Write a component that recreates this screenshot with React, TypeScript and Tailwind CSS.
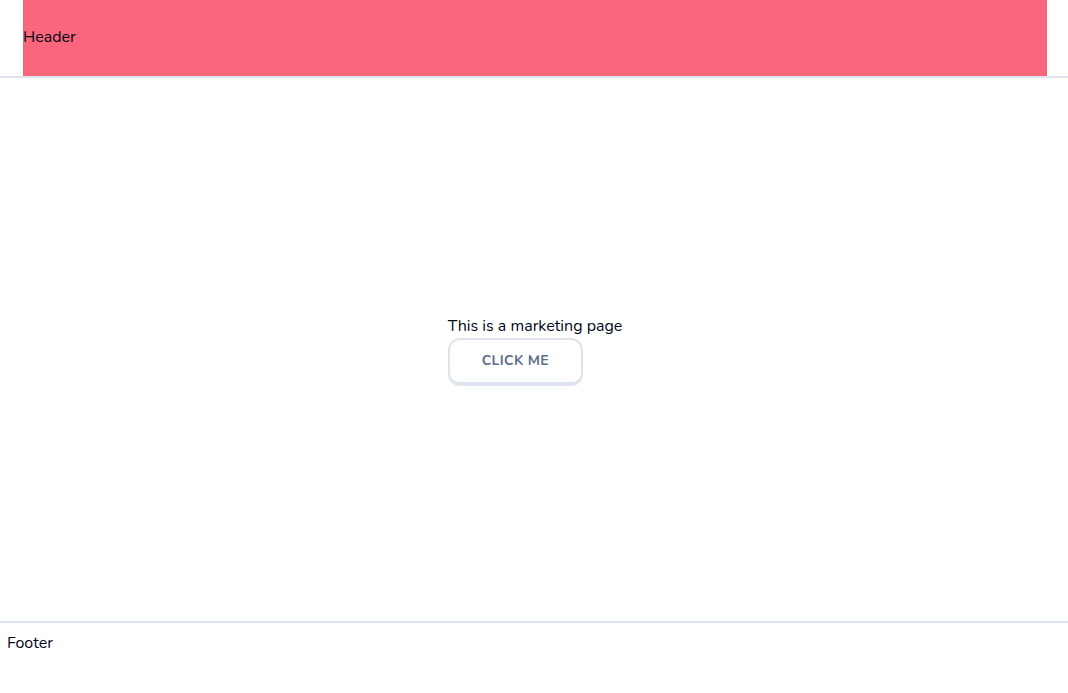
function Header() {
  return (
    <header className="h-[78px] w-full border-b-2 border-[#dee4ed] pl-0.5">
      <div className="mx-auto flex h-full max-w-5xl items-center bg-[#fa667c] pb-0.5">Header</div>
    </header>
  );
}

function Footer() {
  return <footer className="h-[72px] w-full border-t-2 border-[#dee4ed] px-[7px] py-2">Footer</footer>;
}

export default function App() {
  return (
    <div className="flex min-h-screen flex-col bg-white font-['Nunito','Lato',sans-serif] text-base text-[#020817]">
      <Header />
      <main className="flex flex-1 flex-col items-center justify-center pl-0.5">
        <div>
          <p>This is a marketing page</p>
          <button
            type="button"
            className="flex h-12 items-center justify-center rounded-xl border-2 border-b-4 border-[#dee4ed] bg-white px-8 text-sm font-bold tracking-wide text-[#5d6f88] uppercase hover:bg-slate-100"
          >
            Click me
          </button>
        </div>
      </main>
      <Footer />
    </div>
  );
}
